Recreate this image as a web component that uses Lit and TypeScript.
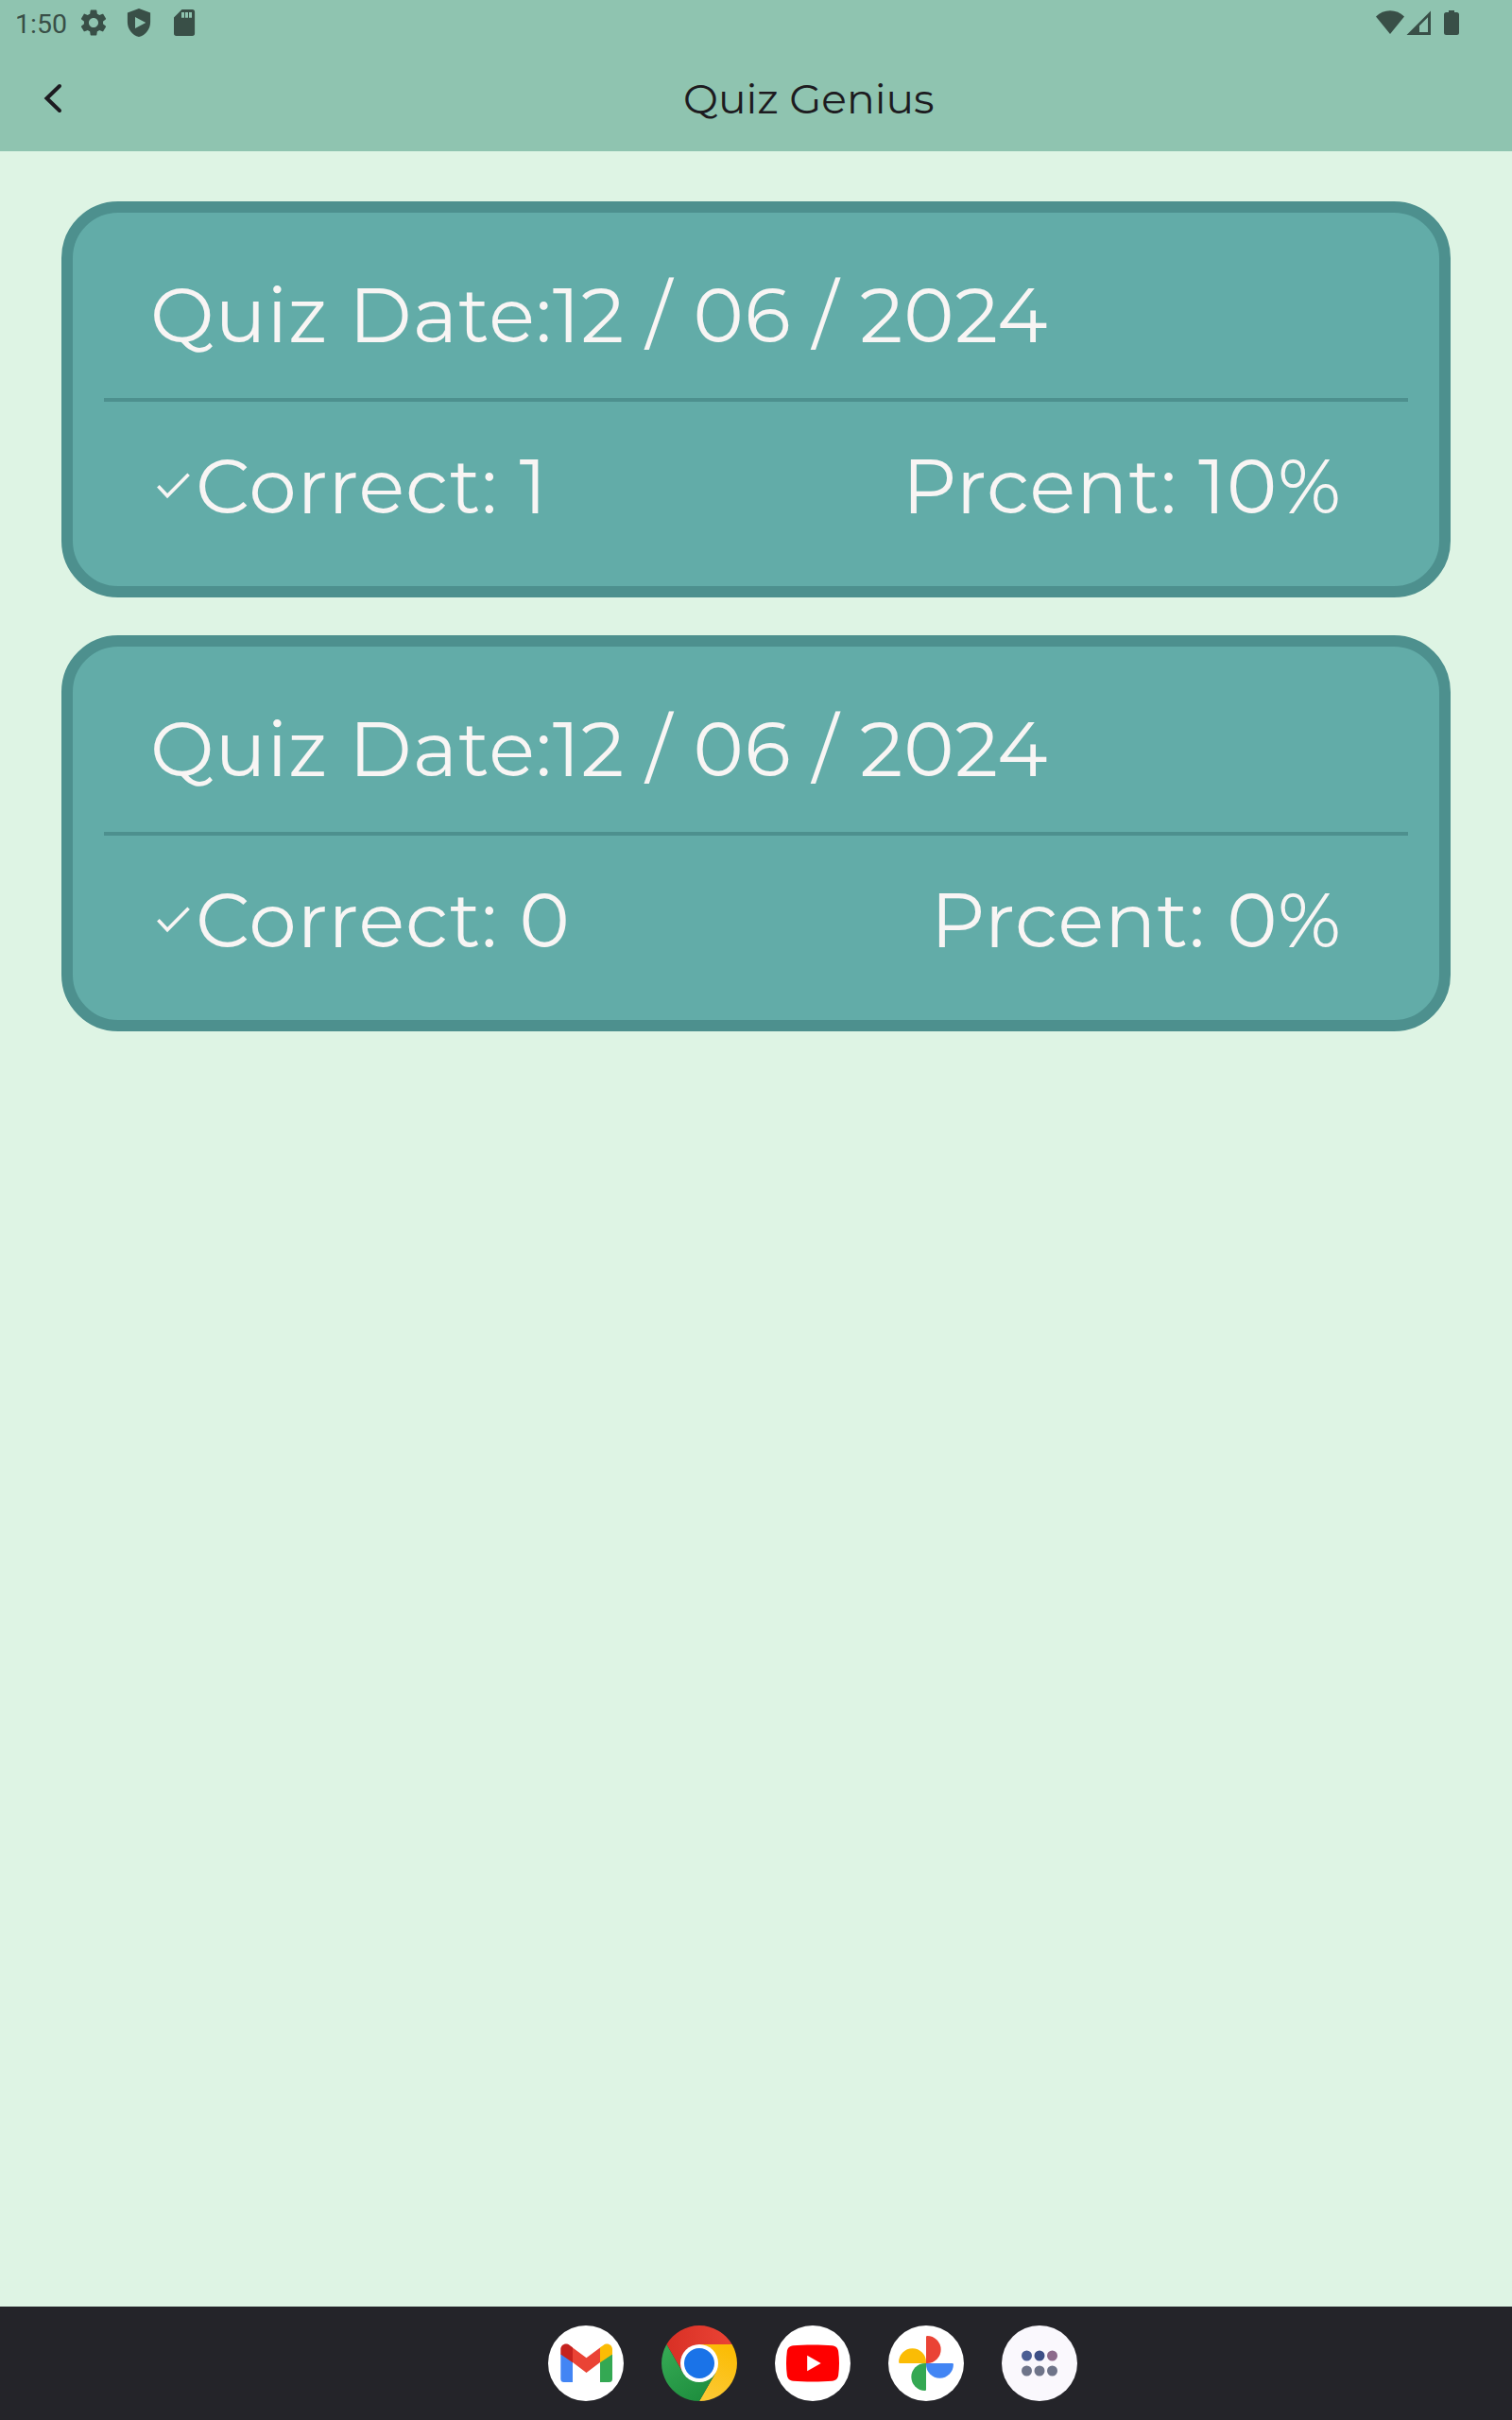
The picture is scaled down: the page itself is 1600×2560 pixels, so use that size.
import { LitElement, html, css, svg } from "lit";
import { customElement, property } from "lit/decorators.js";

interface Result {
  date: string;
  correct: number;
  percent: number;
}

const RESULTS: Result[] = [
  { date: "12 / 06 / 2024", correct: 1, percent: 10 },
  { date: "12 / 06 / 2024", correct: 0, percent: 0 },
];

@customElement("quiz-card")
class QuizCard extends LitElement {
  @property({ attribute: false }) result!: Result;

  static styles = css`
    :host { display: block; }
    .card {
      box-sizing: border-box;
      height: 419px;
      padding: 58px 33px 0;
      border: 12px solid #4d908e;
      border-radius: 60px;
      background: #62aca8;
      color: #f8f5f4;
      font: 400 80.4px/101px Montserrat, Inter, "Liberation Sans", sans-serif;
      letter-spacing: 1px;
    }
    .row {
      display: flex;
      align-items: center;
      height: 101px;
      padding: 0 70px 0 49px;
      white-space: pre;
    }
    .split { justify-content: space-between; }
    .group { display: flex; align-items: center; }
    .rule { height: 4px; margin: 37px 0 39px; background: #4d908e; }
    .check { display: block; width: 41px; height: 28px; margin: 0 0 2px 7px; }
  `;

  render() {
    const r = this.result;
    return html`<div class="card">
      <div class="row">Quiz Date:${r.date}</div>
      <div class="rule"></div>
      <div class="row split">
        <div class="group"><svg class="check" viewBox="0 0 41 28">
            <path d="M1.4 14.300 11.100 24.600 33.600 1.800" fill="none" stroke="#f8f5f4" stroke-width="3.600" />
          </svg><span>Correct: ${r.correct}</span></div>
        <span>Prcent: ${r.percent}%</span>
      </div>
    </div>`;
  }
}

const gmail = svg`
  <circle cx="40" cy="40" r="40" fill="#fff"/>
  <path d="M13.300 30V56.500a3.500 3.500 0 0 0 3.500 3.500H26V38z" fill="#4285f4"/>
  <path d="M68 30V56.500a3.500 3.500 0 0 1-3.500 3.500H55V38z" fill="#34a853"/>
  <path d="M26 23.500 40.500 34.200 55 23.500V39L40.500 50 26 39z" fill="#ea4335"/>
  <path d="M13.300 30.500V25.200c0-5 5.600-7.700 9.600-4.300L26 23.300V39.200z" fill="#c5221f"/>
  <path d="M68 30.500V25.200c0-5-5.600-7.700-9.600-4.300L55 23.300V39.200z" fill="#fbbc04"/>`;

const chrome = svg`
  <defs>
    <linearGradient id="r" x1="0" x2="1"><stop offset="0" stop-color="#d93025"/><stop offset="1" stop-color="#ea4335"/></linearGradient>
    <linearGradient id="y" x1="0.3" y1="1" x2="0.6" y2="0"><stop offset="0" stop-color="#fcc934"/><stop offset="1" stop-color="#fbbc04"/></linearGradient>
    <linearGradient id="g" x1="0.7" y1="1" x2="0.1" y2="0.1"><stop offset="0" stop-color="#1e8e3e"/><stop offset="1" stop-color="#34a853"/></linearGradient>
  </defs>
  <path d="M5.400 20A40 40 0 0 1 74.600 20H40V40L22.700 50z" fill="url(#r)"/>
  <path d="M74.600 20A40 40 0 0 1 40 80L57.300 50 40 40V20z" fill="url(#y)"/>
  <path d="M40 80A40 40 0 0 1 5.400 20L22.700 50 40 40 57.300 50z" fill="url(#g)"/>
  <circle cx="40" cy="40" r="20" fill="#fff"/>
  <circle cx="40" cy="40" r="16" fill="#1a73e8"/>`;

const youtube = svg`
  <circle cx="40" cy="40" r="40" fill="#fff"/>
  <path d="M40 20.500c8 0 15 .2 20.500.7 4.200.4 6.200 2.600 6.700 6.500.5 3.800.8 8 .8 12.300s-.3 8.500-.8 12.300c-.5 3.900-2.500 6.100-6.700 6.500-5.500.5-12.500.7-20.500.7s-15-.2-20.500-.7c-4.200-.4-6.200-2.600-6.700-6.500-.5-3.800-.8-8-.8-12.300s.3-8.500.8-12.300c.5-3.900 2.500-6.100 6.700-6.500 5.500-.5 12.500-.7 20.500-.7z" fill="#f00"/>
  <path d="M34.200 31.800V48.300L48.700 40z" fill="#fff"/>`;

const photos = svg`
  <circle cx="40" cy="40" r="40" fill="#fff"/>
  <path d="M40 40V12.300q0-1.200 1.200-1.200a14.450 14.450 0 0 1 0 28.900z" fill="#ea4335"/>
  <path d="M40 40H67.700q1.200 0 1.200 1.200a14.450 14.450 0 0 1-28.900 0z" fill="#4285f4"/>
  <path d="M40 40V67.700q0 1.200-1.200 1.200a14.450 14.450 0 0 1 0-28.900z" fill="#34a853"/>
  <path d="M40 40H12.300q-1.200 0-1.200-1.200a14.450 14.450 0 0 1 28.900 0z" fill="#fbbc04"/>`;

const apps = svg`
  <circle cx="40" cy="40" r="40" fill="#faf8fd"/>
  <circle cx="26.500" cy="32" r="5.500" fill="#4b5e94"/>
  <circle cx="40" cy="32" r="5.500" fill="#3d4f86"/>
  <circle cx="53.500" cy="32" r="5.500" fill="#8c6a8b"/>
  <circle cx="26.500" cy="48" r="5.500" fill="#6e7489"/>
  <circle cx="40" cy="48" r="5.500" fill="#6e7489"/>
  <circle cx="53.500" cy="48" r="5.500" fill="#6e7489"/>`;

@customElement("app-root")
class AppRoot extends LitElement {
  static styles = css`
    :host { display: block; }
    .screen {
      display: flex;
      flex-direction: column;
      width: 1600px;
      height: 2560px;
      background: #def4e4;
      overflow: hidden;
    }
    .status {
      display: flex;
      justify-content: space-between;
      height: 48px;
      padding: 0 52px 0 16px;
      background: #8fc4b0;
      color: #394f47;
    }
    .cluster { display: flex; align-items: center; height: 48px; }
    .time { width: 67px; padding-top: 3px; font: 400 28.500px/48px Roboto, sans-serif; }
    .glyph { display: block; height: 48px; fill: currentColor; }
    .bar {
      display: flex;
      align-items: center;
      height: 112px;
      padding-left: 40px;
      background: #8fc4b0;
      color: #1d1b20;
    }
    .back { display: block; width: 32px; height: 48px; }
    .title {
      padding-left: 651px;
      font: 400 44px/112px Montserrat, Inter, "Liberation Sans", sans-serif;
    }
    .list {
      flex: 1;
      display: flex;
      flex-direction: column;
      gap: 40px;
      padding: 53px 65px;
    }
    .dock {
      display: flex;
      justify-content: center;
      align-items: center;
      gap: 40px;
      height: 120px;
      padding-left: 120px;
      background: #242429;
    }
    .app { display: block; width: 80px; height: 80px; }
  `;

  render() {
    return html`<div class="screen">
      <div class="status">
        <div class="cluster">
          <span class="time">1:50</span>
          <svg class="glyph" width="130" viewBox="83 0 130 48">
            <g transform="translate(82.200 7.200) scale(1.400)">
              <path d="M19.140 12.940c.04-.3.06-.61.06-.94 0-.32-.02-.64-.07-.94l2.030-1.580c.18-.14.23-.41.12-.61l-1.920-3.320c-.12-.22-.37-.29-.59-.22l-2.390.96c-.5-.38-1.030-.7-1.620-.94l-.36-2.540c-.04-.24-.24-.41-.48-.41h-3.840c-.24 0-.43.17-.47.41l-.36 2.540c-.59.24-1.130.57-1.620.94l-2.390-.96c-.22-.08-.47 0-.59.22L2.740 8.870c-.12.21-.08.47.12.61l2.030 1.580c-.05.3-.09.63-.09.94s.02.64.07.94l-2.030 1.580c-.18.14-.23.41-.12.61l1.920 3.320c.12.22.37.29.59.22l2.390-.96c.5.38 1.030.7 1.620.94l.36 2.540c.05.24.24.41.48.41h3.840c.24 0 .44-.17.47-.41l.36-2.540c.59-.24 1.130-.56 1.620-.94l2.390.96c.22.08.47 0 .59-.22l1.920-3.320c.12-.22.07-.47-.12-.61l-2.010-1.580zM12 15.600c-1.980 0-3.600-1.620-3.600-3.600s1.620-3.600 3.600-3.600 3.600 1.620 3.600 3.600-1.620 3.600-3.600 3.600z"/>
            </g>
            <path fill-rule="evenodd" d="M147 9l12.100 4.500v9.800c0 7.500-5 14-12.100 15.800-7.100-1.800-12.100-8.300-12.100-15.800v-9.800zM143 18v12l11.300-6z"/>
            <path fill-rule="evenodd" d="M192.500 10H203.400a2.700 2.700 0 0 1 2.700 2.700V35.300a2.700 2.700 0 0 1-2.700 2.700H186.700a2.700 2.700 0 0 1-2.700-2.700V18.400zM192 13v5.800h3V13zM196 13v5.800h3V13zM200 13v5.800h3V13z"/>
          </svg>
        </div>
        <svg class="glyph" width="94" viewBox="1454 0 94 48">
          <path d="M1456 17.500q6.500-6.200 15-6.200t15 6.200L1471 36z"/>
          <path fill-rule="evenodd" d="M1488.500 37 1514 11.500V37zM1502 34h9V18.300l-9 9z"/>
          <path d="M1533 11h6v2h2.500a2.500 2.500 0 0 1 2.500 2.500v19a2.500 2.500 0 0 1-2.500 2.500h-11a2.500 2.500 0 0 1-2.500-2.500v-19a2.500 2.500 0 0 1 2.500-2.500h2.500z"/>
        </svg>
      </div>
      <div class="bar">
        <svg class="back" viewBox="40 80 32 48">
          <path d="M63 91 49.500 104 63 117" fill="none" stroke="#1d1b20" stroke-width="4" stroke-linecap="round"/>
        </svg>
        <div class="title">Quiz Genius</div>
      </div>
      <div class="list">${RESULTS.map((r) => html`<quiz-card .result=${r}></quiz-card>`)}</div>
      <div class="dock">
        ${[gmail, chrome, youtube, photos, apps].map((i) => html`<svg class="app" viewBox="0 0 80 80">${i}</svg>`)}
      </div>
    </div>`;
  }
}
